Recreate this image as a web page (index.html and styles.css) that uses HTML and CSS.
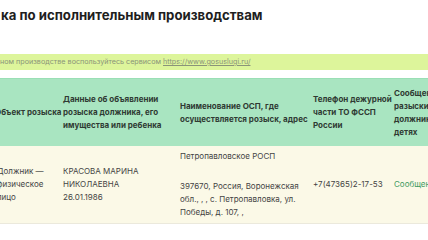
FILE: index.html
```html
<!DOCTYPE html>
<html lang="ru">
<head>
<meta charset="utf-8">
<link rel="stylesheet" href="styles.css">
</head>
<body>
<div class="page">
  <h1 class="title">ка по исполнительным производствам</h1>
  <div class="notice">ном производстве воспользуйтесь сервисом <a class="notice-link" href="#">https://www.gosuslugi.ru/</a></div>
  <table class="results">
    <colgroup>
      <col class="c1"><col class="c2"><col class="c3"><col class="c4"><col class="c5">
    </colgroup>
    <thead>
      <tr>
        <th>Объект розыска</th>
        <th>Данные об объявлении<br>розыска должника, его<br>имущества или ребенка</th>
        <th>Наименование ОСП, где<br>осуществляется розыск, адрес</th>
        <th>Телефон дежурной<br>части ТО ФССП<br>России</th>
        <th>Сообщение о<br>разыскиваемых<br>должниках<br>детях</th>
      </tr>
    </thead>
    <tbody>
      <tr>
        <td class="obj">Должник —<br>физическое<br>лицо</td>
        <td>КРАСОВА МАРИНА<br>НИКОЛАЕВНА<br>26.01.1986</td>
        <td><p class="osp">Петропавловское РОСП</p><p class="addr">397670, Россия, Воронежская<br>обл., , , с. Петропавловка, ул.<br>Победы, д. 107, ,</p></td>
        <td>+7(47365)2-17-53</td>
        <td><a class="msg" href="#">Сообщение</a></td>
      </tr>
    </tbody>
  </table>
</div>
</body>
</html>
```
FILE: styles.css
```css
html, body {
  margin: 0;
  padding: 0;
  background: #fff;
}
.page {
  width: 428px;
  height: 240px;
  overflow: hidden;
  font-family: Inter, "Noto Sans", sans-serif;
  color: #333;
}
.title {
  margin: 5px 0 0 1px;
  font-size: 13.2px;
  line-height: 20px;
  font-weight: 700;
  color: #1e1e1e;
  white-space: nowrap;
}
.notice {
  margin-top: 29px;
  height: 16px;
  line-height: 16px;
  background: #ddf59b;
  font-size: 7.2px;
  color: #8a9479;
  white-space: nowrap;
}
.notice-link {
  color: #8a9479;
  text-decoration: underline;
}
.results {
  margin-top: 8px;
  margin-left: -8px;
  border-collapse: collapse;
  table-layout: fixed;
  width: 530px;
}
.c1 { width: 66px; }
.c2 { width: 117px; }
.c3 { width: 133px; }
.c4 { width: 81px; }
.c5 { width: 133px; }
.results th,
.results td {
  white-space: nowrap;
}
.results th {
  background: #a9e5c1;
  border-top: 1px solid #9adfb5;
  height: 67px;
  padding: 0 5px;
  text-align: left;
  vertical-align: middle;
  font-size: 8px;
  line-height: 13px;
  font-weight: 700;
  color: #2f3a33;
}
.results th:first-child {
  padding-left: 3px;
  padding-right: 0;
}
.results td {
  background: #fbf9e7;
  border-bottom: 1px solid #ebe9dc;
  padding: 4px 5px;
  vertical-align: middle;
  font-size: 8px;
  line-height: 13px;
  color: #444;
}
.results td.obj {
  padding-left: 5px;
  padding-right: 0;
}
.osp {
  margin: 0 0 17px;
}
.addr {
  margin: 0;
}
.msg {
  color: #3e9a62;
  text-decoration: none;
}
```
